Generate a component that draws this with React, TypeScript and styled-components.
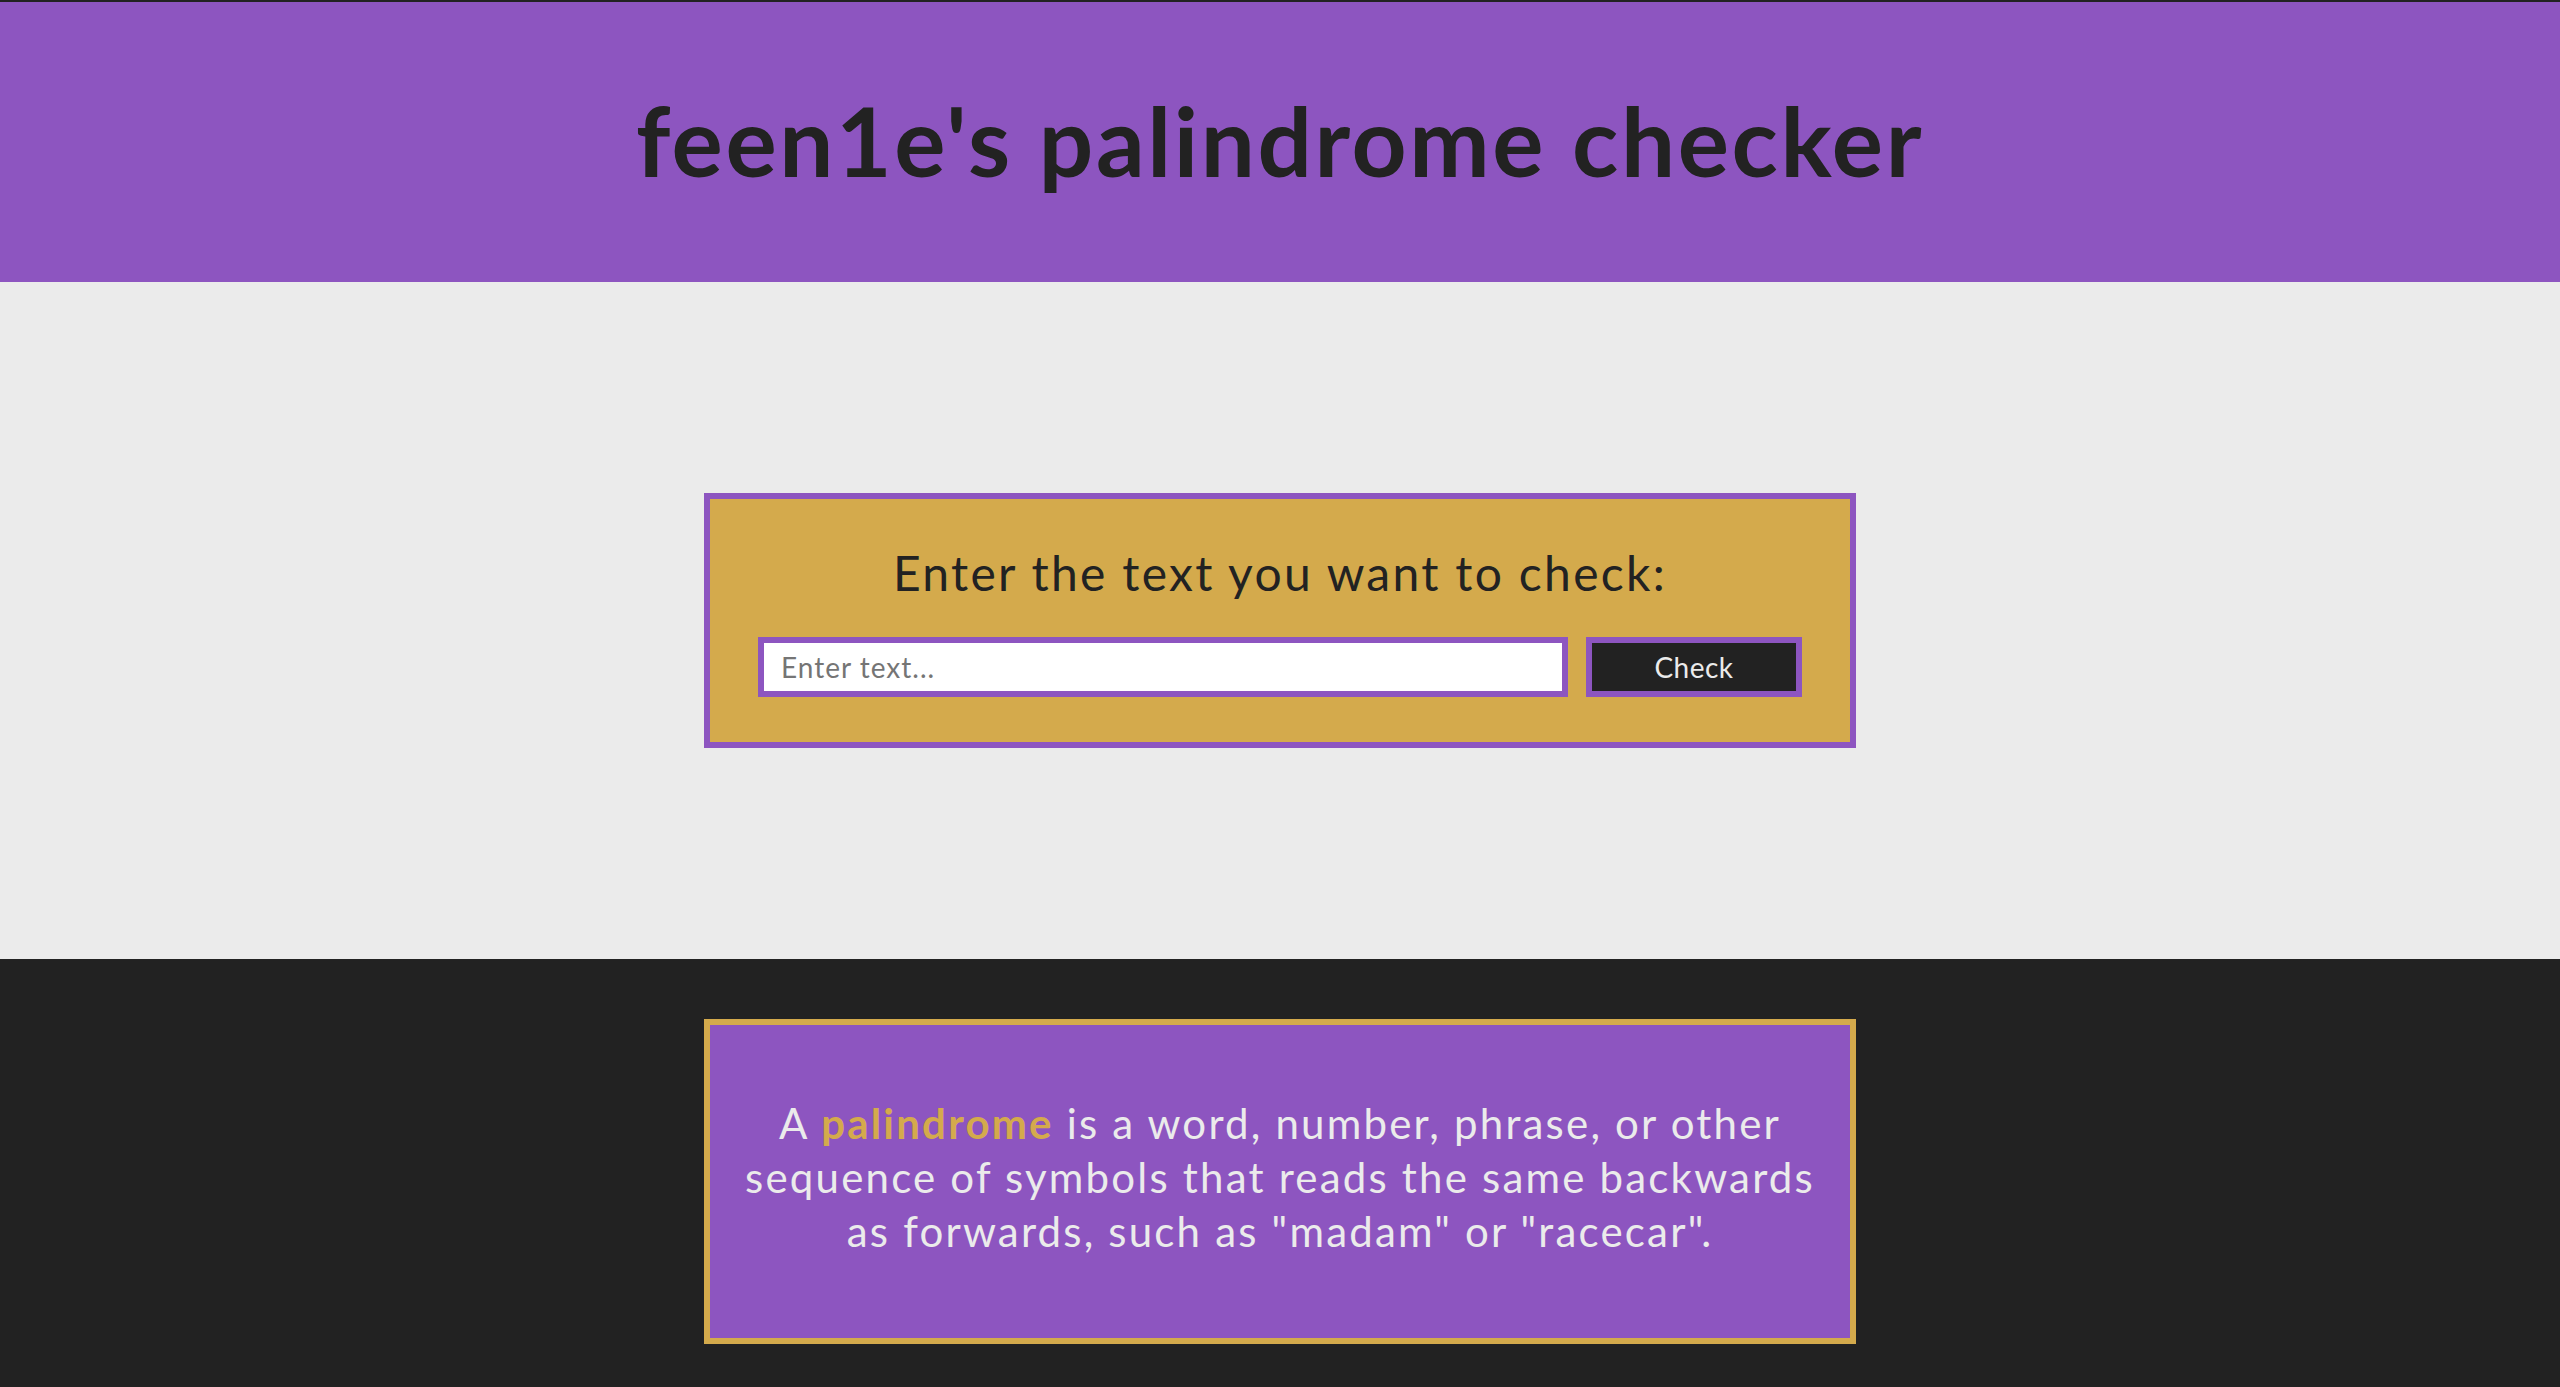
import React, { useState } from 'react';
import styled, { createGlobalStyle } from 'styled-components';

const purple = '#8d55c0';
const gold = '#d4aa4c';
const dark = '#222222';
const light = '#ebebeb';

const GlobalStyle = createGlobalStyle`
  * {
    box-sizing: border-box;
  }

  body {
    margin: 0;
    font-family: Lato, "Noto Sans", sans-serif;
    background-color: ${dark};
    border-top: 2px solid ${dark};
  }
`;

const Header = styled.header`
  height: 280px;
  display: flex;
  align-items: center;
  justify-content: center;
  background-color: ${purple};
`;

const Title = styled.h1`
  margin: 0 0 6px;
  font-size: 96px;
  font-weight: 700;
  letter-spacing: 2.6px;
  color: ${dark};
`;

const Main = styled.main`
  height: 677px;
  display: flex;
  align-items: center;
  justify-content: center;
  background-color: ${light};
`;

const Card = styled.section<{ $bg: string; $border: string }>`
  width: 45%;
  border: 6px solid ${({ $border }) => $border};
  background-color: ${({ $bg }) => $bg};
`;

const CheckerCard = styled(Card)`
  padding: 45px 48px;
`;

const Prompt = styled.h2`
  margin: 0 0 35px;
  font-size: 48px;
  font-weight: 400;
  line-height: 1.2;
  letter-spacing: 2.3px;
  text-align: center;
  color: ${dark};
`;

const InputRow = styled.form`
  display: flex;
  gap: 18px;
  height: 60px;
`;

const TextInput = styled.input`
  flex: 1;
  min-width: 0;
  padding: 0 17px;
  border: 6px solid ${purple};
  border-radius: 0;
  background-color: #ffffff;
  font-family: inherit;
  font-size: 28px;
  letter-spacing: 1px;
  color: ${dark};
  outline: none;

  &::placeholder {
    color: #757575;
  }
`;

const CheckButton = styled.button`
  width: 216px;
  border: 6px solid ${purple};
  border-radius: 0;
  background-color: ${dark};
  font-family: inherit;
  font-size: 28px;
  letter-spacing: 0.5px;
  color: ${light};
  cursor: pointer;
`;

const Footer = styled.footer`
  display: flex;
  justify-content: center;
  padding: 60px 0;
  background-color: ${dark};
`;

const InfoCard = styled(Card)`
  padding: 71px 20px 80px;
`;

const InfoText = styled.p`
  margin: 0;
  font-size: 42px;
  line-height: 54px;
  letter-spacing: 2.2px;
  text-align: center;
  color: ${light};
`;

const Highlight = styled.strong`
  font-weight: 700;
  color: ${gold};
`;

export default function App() {
  const [text, setText] = useState('');

  return (
    <>
      <GlobalStyle />
      <Header>
        <Title>feen1e's palindrome checker</Title>
      </Header>
      <Main>
        <CheckerCard $bg={gold} $border={purple}>
          <Prompt>Enter the text you want to check:</Prompt>
          <InputRow onSubmit={e => e.preventDefault()}>
            <TextInput
              value={text}
              onChange={e => setText(e.target.value)}
              placeholder="Enter text..."
            />
            <CheckButton type="submit">Check</CheckButton>
          </InputRow>
        </CheckerCard>
      </Main>
      <Footer>
        <InfoCard $bg={purple} $border={gold}>
          <InfoText>
            A <Highlight>palindrome</Highlight> is a word, number, phrase, or other sequence of
            symbols that reads the same backwards as forwards, such as "madam" or "racecar".
          </InfoText>
        </InfoCard>
      </Footer>
    </>
  );
}
